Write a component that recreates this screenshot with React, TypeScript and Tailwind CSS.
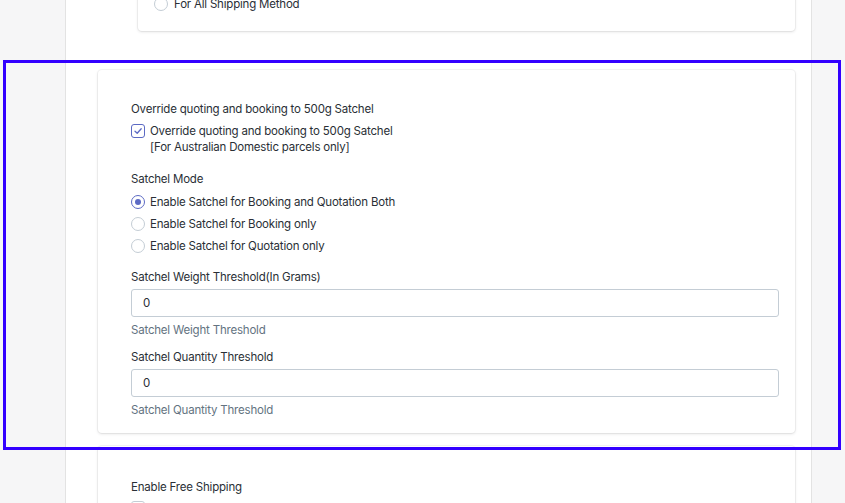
const Radio = ({ checked = false }: { checked?: boolean }) => (
  <span
    className={
      "flex h-[14px] w-[14px] shrink-0 items-center justify-center rounded-full border bg-white " +
      (checked ? "border-[#5c6ac4]" : "border-[#c4cdd5]")
    }
  >
    {checked && <span className="h-[6px] w-[6px] rounded-full bg-[#5c6ac4]" />}
  </span>
)

const Checkbox = ({ checked = false }: { checked?: boolean }) => (
  <span
    className={
      "flex h-[14px] w-[14px] shrink-0 items-center justify-center rounded-[3px] border bg-white " +
      (checked ? "border-[#5c6ac4]" : "border-[#c4cdd5]")
    }
  >
    {checked && (
      <svg width="10" height="10" viewBox="0 0 10 10" fill="none">
        <path d="M2 5.2 L4.2 7.3 L8.2 2.8" stroke="#5c6ac4" strokeWidth="1.3" strokeLinecap="round" strokeLinejoin="round" />
      </svg>
    )}
  </span>
)

const modes = [
  "Enable Satchel for Booking and Quotation Both",
  "Enable Satchel for Booking only",
  "Enable Satchel for Quotation only",
]

const card = "rounded-[4px] bg-white shadow-[0_0_0_1px_rgba(63,63,68,0.05),0_1px_3px_0_rgba(63,63,68,0.15)]"

export default function App() {
  return (
    <div
      className="relative h-[503px] w-[845px] overflow-hidden bg-[#f6f6f7] text-[11.5px] leading-4 tracking-[-0.2px] text-[#2a2f36]"
      style={{ fontFamily: "Inter, 'Noto Sans', sans-serif" }}
    >
      <div className="ml-[65px] flex h-full w-[747px] flex-col border-x border-[#e3e3e3] bg-white">
        {/* previous card */}
        <div className={"-mt-[20px] ml-[72px] mr-[16px] pb-[17px] pl-[16px] pt-[14px] " + card}>
          <label className="flex h-5 items-center gap-[6px]">
            <Radio />
            <span>For All Shipping Method</span>
          </label>
        </div>

        {/* satchel card */}
        <div className={"ml-[32px] mr-[16px] mt-[39px] pb-[15px] pl-[33px] pr-[16px] pt-[31px] " + card}>
          <div>Override quoting and booking to 500g Satchel</div>
          <label className="mt-[6px] flex gap-[5px]">
            <span className="pt-[1px]">
              <Checkbox checked />
            </span>
            <span>
              Override quoting and booking to 500g Satchel
              <br />
              [For Australian Domestic parcels only]
            </span>
          </label>

          <div className="mt-[16px]">Satchel Mode</div>
          <div className="mt-[4px] flex flex-col">
            {modes.map((m, i) => (
              <label key={m} className="flex h-[22px] items-center gap-[5px]">
                <Radio checked={i === 0} />
                <span>{m}</span>
              </label>
            ))}
          </div>

          <div className="mt-[12px]">Satchel Weight Threshold(In Grams)</div>
          <input
            className="mt-[4px] block h-[28px] w-full rounded-[3px] border border-[#c4cdd5] px-[11px] text-[11.5px] text-[#2a2f36] outline-none"
            defaultValue="0"
          />
          <div className="mt-[5px] text-[#637381]">Satchel Weight Threshold</div>

          <div className="mt-[11px]">Satchel Quantity Threshold</div>
          <input
            className="mt-[4px] block h-[28px] w-full rounded-[3px] border border-[#c4cdd5] px-[11px] text-[11.5px] text-[#2a2f36] outline-none"
            defaultValue="0"
          />
          <div className="mt-[5px] text-[#637381]">Satchel Quantity Threshold</div>
        </div>

        {/* free shipping card */}
        <div className={"ml-[32px] mr-[16px] mt-[13px] h-[200px] shrink-0 pl-[33px] pt-[33px] " + card}>
          <div>Enable Free Shipping</div>
          <div className="mt-[6px]">
            <Checkbox />
          </div>
        </div>
      </div>

      {/* highlight frame */}
      <div className="pointer-events-none absolute left-[3px] top-[60px] h-[390px] w-[838px] border-[3px] border-[#3300ff]" />
    </div>
  )
}
